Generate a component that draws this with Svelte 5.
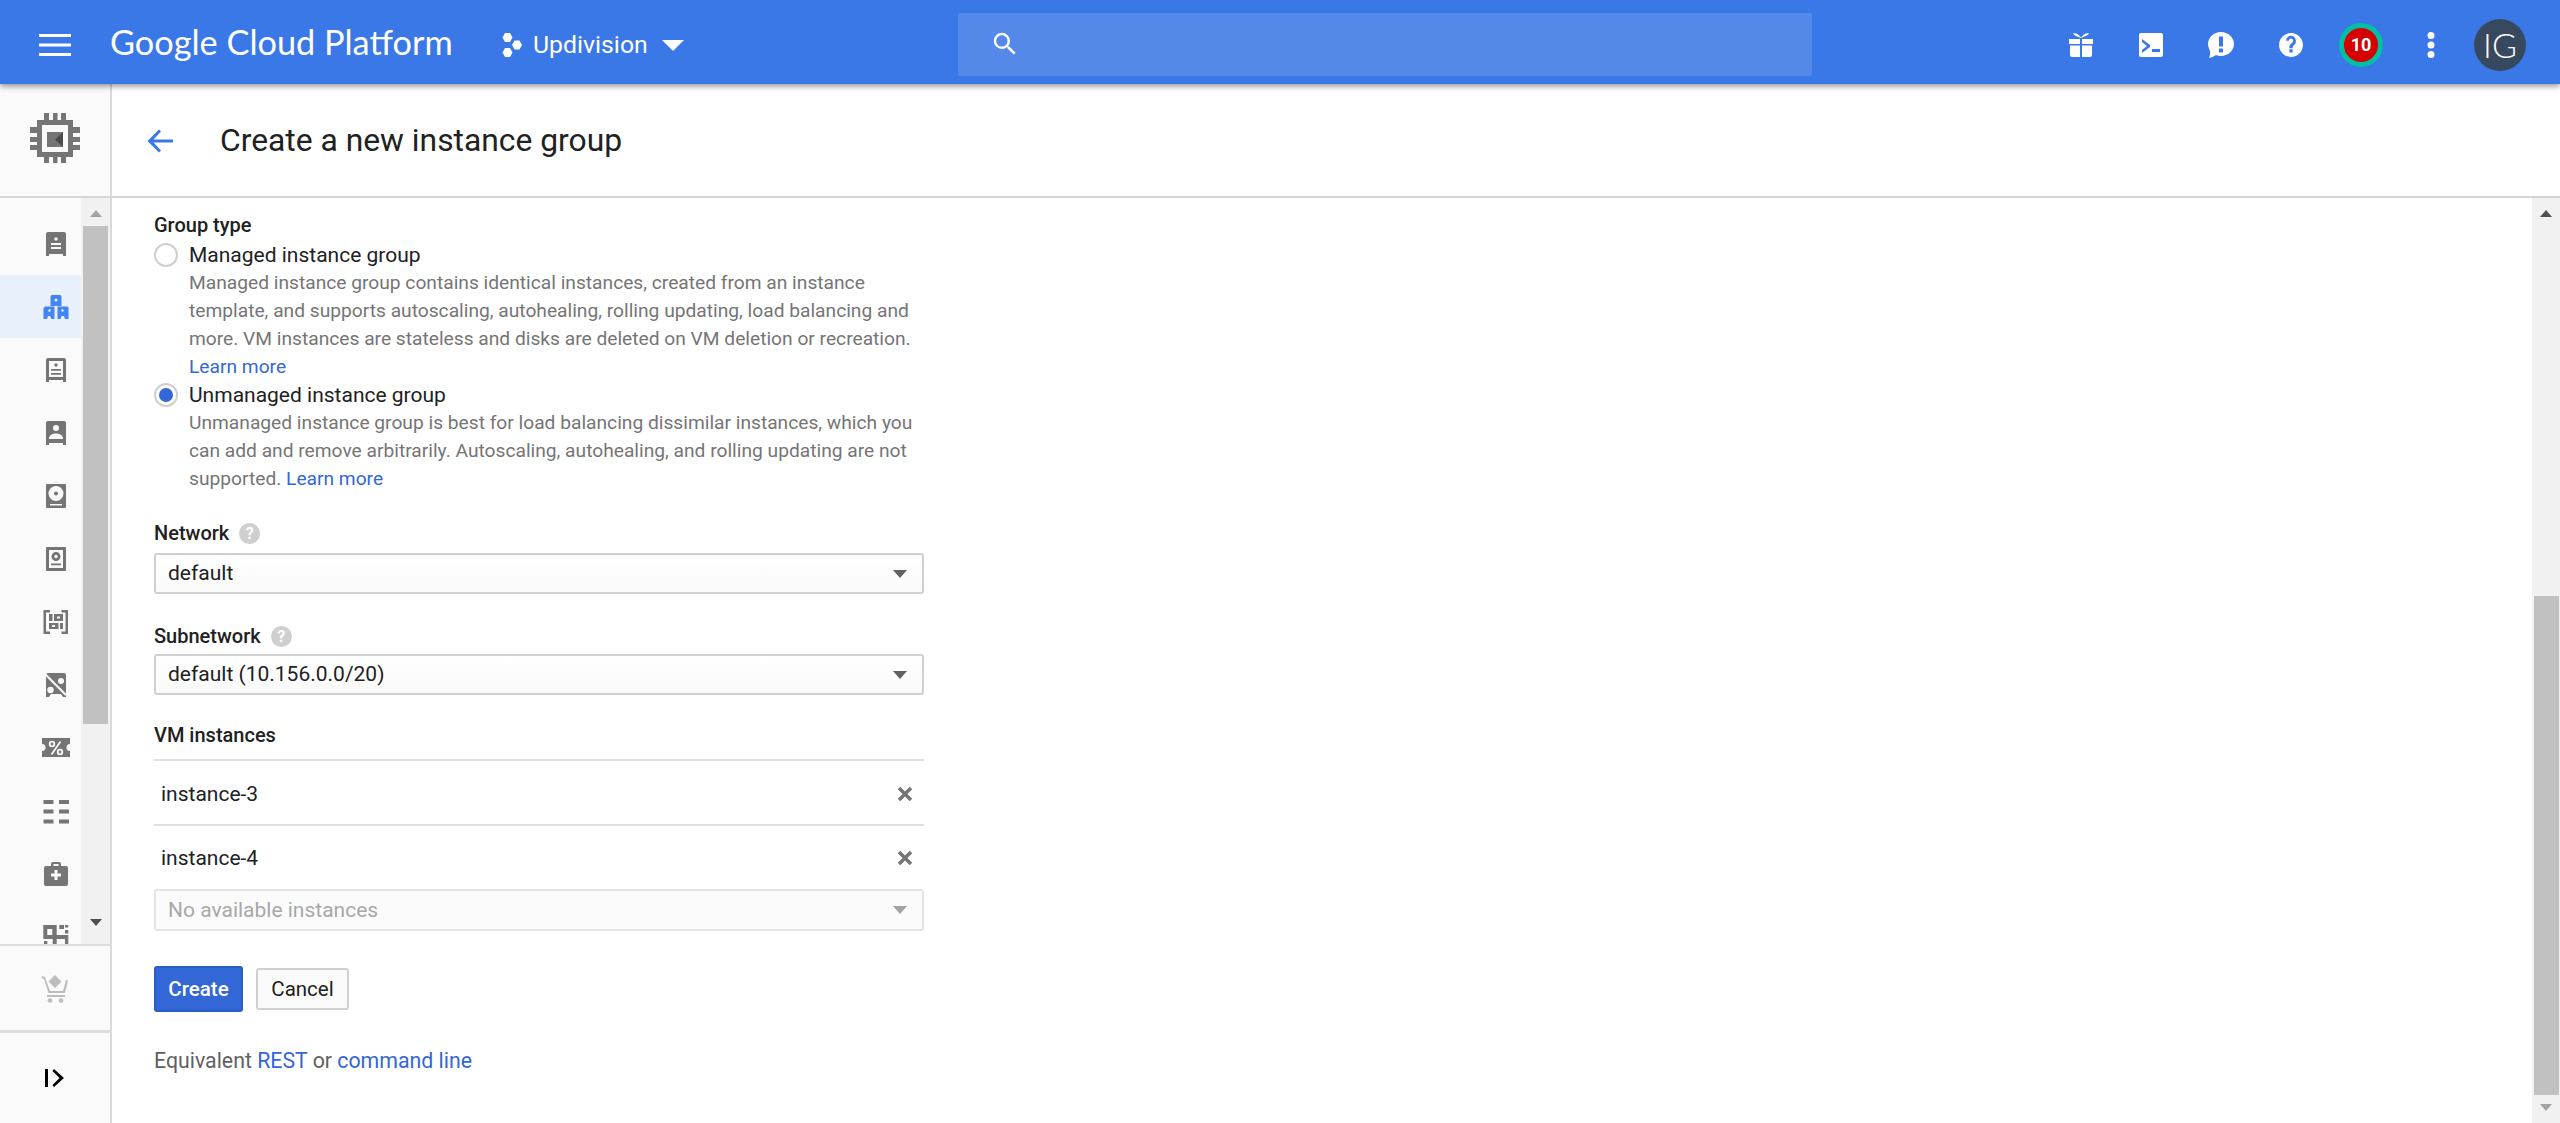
<script>
	const dot = (x, y, r) => `M${x - r} ${y}a${r} ${r} 0 1 0 ${2 * r} 0a${r} ${r} 0 1 0 ${-2 * r} 0z`;
	const box = 'M8 4h16a2 2 0 0 1 2 2v22h-3v-2H9v2H6V6a2 2 0 0 1 2-2z';

	const navItems = [
		{ d: box + dot(16, 11, 1.7) + 'M11 15h10v2H11zM11 19h10v2H11z' },
		{
			active: true,
			d: 'M12 4h8a1.500 1.500 0 0 1 1.500 1.500V15H10.500V5.500A1.500 1.500 0 0 1 12 4z' + dot(16, 9, 1.5) +
				'M5 15.500h9.500V28h-3l-1.500-3H8l-1 3H3.500V17z M17.500 15.500H27a1.500 1.500 0 0 1 1.500 1.500v11H25l-1-3h-2.500l-1 3h-3z' + dot(9.500, 19.500, 1.3) + dot(22.500, 19.500, 1.3)
		},
		{ d: box + 'M9 7h14v16H9z' + dot(16, 11, 1.7) + 'M11 15h10v1.800H11zM11 19h10v1.800H11z' },
		{ d: box + dot(16, 11, 3) + 'M9 21c1-3.500 4-4.500 7-4.500s6 1 7 4.500v1H9z' },
		{ d: 'M7 4h18a1 1 0 0 1 1 1v22a1 1 0 0 1-1 1H7a1 1 0 0 1-1-1V5a1 1 0 0 1 1-1z' + dot(16, 13.500, 7.500) + dot(16, 13.500, 2) + 'M10 24h12v1.500H10z' },
		{ d: 'M7 4h18a1 1 0 0 1 1 1v22a1 1 0 0 1-1 1H7a1 1 0 0 1-1-1V5a1 1 0 0 1 1-1z M9 7v18h14V7z' + dot(16, 13.500, 4.500) + dot(16, 13.500, 1.700) + 'M11 20.500h10v1.800H11z' },
		{ d: 'M3.500 4H10v2.500H6V25.500h4V28H3.500zM21.500 4H28v24h-6.500v-2.500h4V6.500h-4zM9 8h3.500v7H9zM14 8h9v7h-9z M17 10.500v2h3v-2zM9 17h9.500v6H9z M12 19v2h3v-2zM20 17h3v6h-3z' },
		{ d: 'M8 4h16a2 2 0 0 1 2 2v22h-3l-2-3H11l-2 3H6V6a2 2 0 0 1 2-2z' + dot(21, 12, 3) + dot(10.500, 21, 3.200) },
		{ d: 'M2 6h28v6a3 3 0 0 0 0 7v6H2v-6a3 3 0 0 0 0-7z' },
		{ d: 'M3.500 5h10v4h-10zM19 5h10v4H19zM3.500 14.500h10v4h-10zM19 14.500h10v4H19zM3.500 24.500h10v4h-10zM19 24.500h10v4H19z' },
		{ d: 'M11 8V6a2 2 0 0 1 2-2h6a2 2 0 0 1 2 2v2h5a2 2 0 0 1 2 2v16a2 2 0 0 1-2 2H6a2 2 0 0 1-2-2V10a2 2 0 0 1 2-2z M13.500 6v2h5V6z M14.500 12v3.500H11v3h3.500V22h3v-3.500H21v-3h-3.500V12z' },
		{ d: 'M3.300 4h13.400v10h8.300v4H16.700v12h-4V18H3.300z M7.300 8v6h5V8z M25 14h3.300v16H25z M19.300 4H24v4h-4.700z M25 4h3.300v2.500H25z M25 9h3.300v3.500H25z M4 20h3.300v3.300H4z' }
	];
</script>

<div class="app">
	<header class="topbar">
		<div class="brand">
			<button class="menu" aria-label="Main menu">
				<svg width="32" height="22" viewBox="0 0 32 22"><path d="M0 0h32v3H0zM0 9.500h32v3H0zM0 19h32v3H0z" /></svg>
			</button>
			<span class="logo">Google Cloud Platform</span>
			<span class="project">
				<svg width="24" height="26" viewBox="0 0 24 26"><path d="M5 1h5l2.500 4.500L10 10H5L2.500 5.500zM5 16h5l2.500 4.500L10 25H5l-2.500-4.500zM14.500 8.500h5l2.500 4.500-2.500 4.500h-5L12 13z" /></svg>
				Updivision
				<i class="caret"></i>
			</span>
		</div>
		<div class="search">
			<svg width="30" height="30" viewBox="0 0 24 24"><path d="M15.500 14h-.79l-.28-.27A6.470 6.470 0 0 0 16 9.500 6.500 6.500 0 1 0 9.500 16c1.610 0 3.090-.59 4.230-1.570l.27.28v.79l5 4.990L20.490 19l-4.990-5zm-6 0C7.010 14 5 11.990 5 9.500S7.010 5 9.500 5 14 7.010 14 9.500 11.990 14 9.500 14z" /></svg>
		</div>
		<div class="actions">
			<button aria-label="Gift">
				<svg width="26" height="26" viewBox="0 0 26 26"><path d="M1 7h11v5H1zM14 7h11v5H14zM2 13.500h10V25H4a2 2 0 0 1-2-2zM14 13.500h10V23a2 2 0 0 1-2 2h-8zM5 1.500c3-1 6 1.500 8 4 2-2.500 5-5 8-4-1 2-5 3-8 4.500C10 4.500 6 3.500 5 1.500z" /></svg>
			</button>
			<button aria-label="Cloud Shell">
				<svg width="26" height="26" viewBox="0 0 26 26"><path fill-rule="evenodd" d="M3 1h20a2 2 0 0 1 2 2v20a2 2 0 0 1-2 2H3a2 2 0 0 1-2-2V3a2 2 0 0 1 2-2zM4 10l5 4-5 4v3l8-6v-2L4 7zM14 17v3h8v-3z" /></svg>
			</button>
			<button aria-label="Feedback">
				<svg width="28" height="28" viewBox="0 0 28 28"><path fill-rule="evenodd" d="M14 1c7 0 13 5.500 13 12s-6 12-13 12c-2 0-3.500-.4-5-1-2 1.500-5 2.500-7 3 1-2 1.500-5 1-7-1-2.200-2-4.500-2-7C1 6.500 7 1 14 1zM12 5.500v10h4v-10zM12 17.500v4h4v-4z" /></svg>
			</button>
			<button aria-label="Help">
				<svg width="26" height="26" viewBox="0 0 24 24"><path d="M12 1C5.900 1 1 5.900 1 12s4.900 11 11 11 11-4.900 11-11S18.100 1 12 1zm1.500 18h-3v-3h3v3zm2.700-8.400-1.200 1.200c-1 1-1.500 1.700-1.500 3.200h-3V14c0-1.100.5-2.100 1.300-2.900l1.700-1.700c.4-.4.500-.9.500-1.400 0-1.100-.9-2-2-2s-2 .9-2 2H7.500a4.500 4.500 0 0 1 9 0c0 1-.2 1.900-.3 2.600z" /></svg>
			</button>
			<button aria-label="Notifications"><span class="badge">10</span></button>
			<button aria-label="More">
				<svg width="8" height="26" viewBox="0 0 8 26"><path d="M4 0a3.500 3.500 0 1 1 0 7 3.500 3.500 0 0 1 0-7zM4 9.500a3.500 3.500 0 1 1 0 7 3.500 3.500 0 0 1 0-7zM4 19a3.500 3.500 0 1 1 0 7 3.500 3.500 0 0 1 0-7z" /></svg>
			</button>
			<span class="avatar">IG</span>
		</div>
	</header>

	<div class="body">
		<aside class="sidebar">
			<div class="product">
				<svg width="54" height="54" viewBox="0 0 54 54">
					<path fill="#757575" d="M16 1h5v7h-5zM25 1h4.500v7H25zM33 1h5v7h-5zM16 45h5v6h-5zM25 45h4.500v6H25zM33 45h5v6h-5zM2 15h7v6H2zM2 25h7v5H2zM2 33h7v5H2zM45 15h7v6h-7zM45 25h7v5h-7zM45 33h7v5h-7z" />
					<path fill="#757575" fill-rule="evenodd" d="M9 8h36v37H9zM14 13v27h26V13z" />
					<path fill="#757575" d="M19 20h16v15H19z" />
					<path fill="#4a4a4a" d="M35 20v15l-8-7.500z" />
				</svg>
			</div>
			<div class="nav-wrap">
				<nav class="nav">
					{#each navItems as item, i}
						<div class="nav-item" class:active={item.active}>
							<svg width="32" height="32" viewBox="0 0 32 32">
								<path fill-rule="evenodd" d={item.d} />
								{#if i === 7}
									<path d="M5 5l21 21" fill="none" stroke="#fafafa" stroke-width="2.200" />
								{/if}
								{#if i === 8}
									<g fill="none" stroke="#fafafa" stroke-width="1.800">
										<circle cx="12" cy="12" r="2.300" />
										<circle cx="20" cy="20" r="2.300" />
										<path d="M20.500 9.500l-9 13" />
									</g>
								{/if}
							</svg>
						</div>
					{/each}
				</nav>
				<div class="scrollbar side">
					<i class="arrow up light"></i>
					<div class="thumb"></div>
					<i class="arrow down"></i>
				</div>
			</div>
			<div class="side-foot">
				<svg width="32" height="32" viewBox="0 0 32 32">
					<path fill="#bdbdbd" d="M16 3l6.500 6.500L16 16l-6.500-6.500zM3 4l3 1 5 14h13l3-11 2 .6L26 21H9.500L5 7 2.500 6zM8 23h18v2H8z" />
					<circle fill="#bdbdbd" cx="11" cy="28.500" r="2.300" />
					<circle fill="#bdbdbd" cx="22" cy="28.500" r="2.300" />
				</svg>
			</div>
			<div class="side-foot collapse">
				<svg width="20" height="18" viewBox="0 0 20 18"><path d="M0 0h3v18H0z" /><path d="M9 0l10 9-10 9-1.500-2 7-7-7-7z" /></svg>
			</div>
		</aside>

		<main class="main">
			<div class="title-row">
				<svg class="back" width="30" height="30" viewBox="0 0 30 30"><path d="M28 13.500H8.500L16 5.600 14 3.500 2.500 15 14 26.500l2-2.100-7.500-7.900H28z" /></svg>
				<h1>Create a new instance group</h1>
			</div>
			<div class="content">
				<form class="form" onsubmit={(e) => e.preventDefault()}>
					<div class="label">Group type</div>
					<label class="radio first">
						<i class="circle"></i>Managed instance group
					</label>
					<p class="desc">
						Managed instance group contains identical instances, created from an instance<br />
						template, and supports autoscaling, autohealing, rolling updating, load balancing and<br />
						more. VM instances are stateless and disks are deleted on VM deletion or recreation.<br />
						<a href="#managed">Learn more</a>
					</p>
					<label class="radio">
						<i class="circle on"></i>Unmanaged instance group
					</label>
					<p class="desc">
						Unmanaged instance group is best for load balancing dissimilar instances, which you<br />
						can add and remove arbitrarily. Autoscaling, autohealing, and rolling updating are not<br />
						supported. <a href="#unmanaged">Learn more</a>
					</p>

					<div class="label network">Network <i class="help">?</i></div>
					<div class="select net-select">default<i class="tri"></i></div>

					<div class="label subnet">Subnetwork <i class="help">?</i></div>
					<div class="select sub-select">default (10.156.0.0/20)<i class="tri"></i></div>

					<div class="label vm">VM instances</div>
					<div class="vm-row ruled">instance-3
						<svg class="remove" width="16" height="16" viewBox="0 0 16 16"><path d="M2 2l12 12M14 2L2 14" /></svg>
					</div>
					<div class="vm-row">instance-4
						<svg class="remove" width="16" height="16" viewBox="0 0 16 16"><path d="M2 2l12 12M14 2L2 14" /></svg>
					</div>
					<div class="select disabled">No available instances<i class="tri"></i></div>

					<div class="buttons">
						<button class="btn primary">Create</button>
						<button class="btn">Cancel</button>
					</div>

					<p class="equiv">Equivalent <a href="#rest">REST</a> or <a href="#cli">command line</a></p>
				</form>
				<div class="scrollbar page">
					<i class="arrow up"></i>
					<div class="thumb"></div>
					<i class="arrow down light"></i>
				</div>
			</div>
		</main>
	</div>
</div>

<style>
	:global(body) {
		margin: 0;
		background: #fff;
	}
	.app {
		width: 2560px;
		height: 1123px;
		display: flex;
		flex-direction: column;
		overflow: hidden;
		font-family: Roboto, "Liberation Sans", sans-serif;
		font-size: 21px;
		line-height: 28px;
		color: #212121;
	}
	button {
		font-family: inherit;
	}

	/* top bar */
	.topbar {
		position: relative;
		z-index: 2;
		flex: none;
		height: 84px;
		background: #3b78e7;
		box-shadow: 0 2px 6px rgba(0, 0, 0, 0.45);
		display: grid;
		grid-template-columns: 958px 854px 1fr;
		align-items: center;
		color: #fff;
	}
	.topbar svg {
		fill: #fff;
		display: block;
	}
	.brand {
		display: flex;
		align-items: center;
	}
	.menu {
		width: 110px;
		height: 84px;
		padding: 0;
		border: 0;
		background: none;
		display: flex;
		align-items: center;
		justify-content: center;
	}
	.logo {
		font-family: Lato, sans-serif;
		font-size: 34.300px;
		line-height: 84px;
		margin-bottom: 6px;
		width: 390px;
		white-space: nowrap;
	}
	.project {
		display: flex;
		align-items: center;
		gap: 9px;
		font-size: 24.800px;
	}
	.caret {
		width: 0;
		height: 0;
		margin-left: 5px;
		border: 11px solid transparent;
		border-top: 11px solid #fff;
		border-bottom: 0;
	}
	.search {
		height: 63px;
		margin-top: -2px;
		background: rgba(255, 255, 255, 0.13);
		border-radius: 2px;
		display: flex;
		align-items: center;
		padding-left: 32px;
	}
	.actions {
		display: flex;
		align-items: center;
		justify-content: flex-end;
		padding-right: 34px;
	}
	.actions button {
		width: 70px;
		height: 70px;
		padding: 0;
		border: 0;
		background: none;
		display: flex;
		align-items: center;
		justify-content: center;
	}
	.badge {
		box-sizing: border-box;
		width: 44px;
		height: 44px;
		border-radius: 50%;
		border: 5px solid #00bfa5;
		background: #d50000;
		color: #fff;
		font-family: Roboto, sans-serif;
		font-weight: 700;
		font-size: 18px;
		line-height: 34px;
		text-align: center;
	}
	.avatar {
		width: 52px;
		height: 52px;
		margin-left: 8px;
		border-radius: 50%;
		background: #37495f;
		font-family: Lato, sans-serif;
		font-weight: 300;
		font-size: 34px;
		line-height: 52px;
		text-align: center;
	}

	/* layout */
	.body {
		flex: 1;
		display: flex;
		min-height: 0;
	}
	.sidebar {
		flex: none;
		box-sizing: border-box;
		width: 112px;
		border-right: 2px solid #dadada;
		background: #fafafa;
		display: flex;
		flex-direction: column;
	}
	.product {
		flex: none;
		box-sizing: border-box;
		height: 114px;
		border-bottom: 2px solid #d6d6d6;
		display: flex;
		align-items: center;
		justify-content: center;
		padding-bottom: 2px;
	}
	.nav-wrap {
		flex: none;
		height: 746px;
		display: flex;
		overflow: hidden;
	}
	.nav {
		width: 81px;
		padding-top: 14px;
	}
	.nav-item {
		height: 63px;
		display: flex;
		align-items: center;
		justify-content: center;
		padding-left: 30px;
		box-sizing: border-box;
		fill: #757575;
	}
	.nav-item svg {
		display: block;
		flex: none;
	}
	.nav-item.active {
		background: #e8f0fb;
		fill: #4285f4;
	}
	.scrollbar {
		background: #f1f1f1;
		display: flex;
		flex-direction: column;
		align-items: center;
		position: relative;
	}
	.scrollbar.side {
		width: 29px;
	}
	.scrollbar.page {
		flex: none;
		width: 28px;
	}
	.thumb {
		background: #c1c1c1;
	}
	.side .thumb {
		width: 25px;
		height: 498px;
		margin-top: 9px;
	}
	.page .thumb {
		width: 25px;
		height: 499px;
		margin-top: 379px;
		margin-left: 1px;
	}
	.arrow {
		width: 0;
		height: 0;
		border-left: 6.500px solid transparent;
		border-right: 6.500px solid transparent;
	}
	.arrow.up {
		margin-top: 12px;
		border-bottom: 7px solid #505050;
	}
	.arrow.down {
		border-top: 7px solid #505050;
	}
	.arrow.light.up {
		border-bottom-color: #a3a3a3;
	}
	.arrow.light.down {
		border-top-color: #a3a3a3;
	}
	.side .arrow.down {
		margin-top: 195px;
	}
	.page .arrow.down {
		margin-top: 9px;
	}
	.side-foot {
		flex: none;
		box-sizing: border-box;
		height: 86px;
		border-top: 2px solid #dedede;
		display: flex;
		align-items: center;
		justify-content: center;
	}
	.side-foot.collapse {
		flex: 1;
		border-top-width: 3px;
	}
	.main {
		flex: 1;
		display: flex;
		flex-direction: column;
		min-width: 0;
	}
	.title-row {
		flex: none;
		box-sizing: border-box;
		height: 114px;
		border-bottom: 2px solid #d4d4d4;
		display: flex;
		align-items: center;
		padding-left: 33px;
	}
	.back {
		fill: #3b78e7;
		margin: 2px 45px 0 0;
	}
	h1 {
		margin: 0;
		font-size: 31.800px;
		font-weight: 400;
		line-height: 40px;
		color: #212121;
	}
	.content {
		flex: 1;
		display: flex;
		justify-content: space-between;
		min-height: 0;
	}

	/* form */
	.form {
		width: 770px;
		margin-left: 42px;
		padding-top: 13px;
	}
	.label {
		font-size: 20px;
		font-weight: 500;
		display: flex;
		align-items: center;
		gap: 10px;
	}
	.label.network {
		margin-top: 26px;
	}
	.label.subnet {
		margin-top: 28px;
	}
	.label.vm {
		margin-top: 26px;
		padding-bottom: 10px;
		border-bottom: 2px solid #e0e0e0;
	}
	.help {
		width: 21px;
		height: 21px;
		border-radius: 50%;
		background: #cfcfcf;
		color: #fff;
		font-style: normal;
		font-size: 16px;
		font-weight: 700;
		line-height: 21px;
		text-align: center;
	}
	.radio {
		display: flex;
		align-items: center;
		height: 28px;
	}
	.radio.first {
		margin-top: 2px;
	}
	.circle {
		box-sizing: border-box;
		flex: none;
		width: 24px;
		height: 24px;
		margin-right: 11px;
		border-radius: 50%;
		border: 2px solid #cfcfcf;
		background: #fff;
		display: flex;
		align-items: center;
		justify-content: center;
	}
	.circle.on::after {
		content: "";
		width: 14px;
		height: 14px;
		border-radius: 50%;
		background: #3367d6;
	}
	.desc {
		margin: 0 0 0 35px;
		font-size: 19.200px;
		color: #757575;
		white-space: nowrap;
	}
	a {
		color: #3367d6;
		text-decoration: none;
	}
	.select {
		box-sizing: border-box;
		height: 41px;
		margin-top: 6px;
		padding: 0 12px;
		border: 2px solid #d0d0d0;
		border-radius: 3px;
		background: linear-gradient(#fff, #fafafa);
		display: flex;
		align-items: center;
		justify-content: space-between;
		line-height: 37px;
	}
	.select.sub-select {
		margin-top: 4px;
	}
	.select.disabled {
		margin-top: 0;
		height: 42px;
		border-color: #e4e4e4;
		background: #fbfbfb;
		color: #a8a8a8;
	}
	.tri {
		width: 0;
		height: 0;
		border-left: 7px solid transparent;
		border-right: 7px solid transparent;
		border-top: 8px solid #616161;
		margin-right: 3px;
	}
	.disabled .tri {
		border-top-color: #a3a3a3;
	}
	.vm-row {
		box-sizing: border-box;
		height: 63px;
		padding: 0 11px 0 7px;
		display: flex;
		align-items: center;
		justify-content: space-between;
	}
	.vm-row.ruled {
		height: 65px;
		border-bottom: 2px solid #e0e0e0;
		padding-top: 2px;
	}
	.remove {
		fill: none;
		stroke: #757575;
		stroke-width: 3.500;
	}
	.buttons {
		margin-top: 35px;
		display: flex;
		align-items: center;
		gap: 13px;
	}
	.btn {
		box-sizing: border-box;
		width: 93px;
		height: 42px;
		padding: 0;
		border: 2px solid #d0d0d0;
		border-radius: 3px;
		background: #fafafa;
		color: #212121;
		font-size: 20.500px;
		font-weight: 400;
	}
	.btn.primary {
		width: 89px;
		height: 46px;
		border-color: #2a5bc6;
		background: #3367d6;
		color: #fff;
		font-weight: 500;
	}
	.equiv {
		margin: 35px 0 0;
		font-size: 21.300px;
		color: #616161;
	}
</style>
